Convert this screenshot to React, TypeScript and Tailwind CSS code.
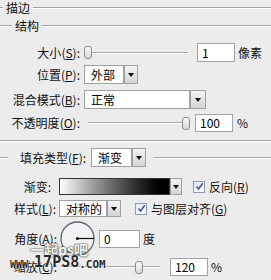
import React from "react";

const font = { fontFamily: '"Noto Sans CJK SC", "Liberation Sans", sans-serif' };

function Key({ k }: { k: string }) {
  return (
    <>
      (<span className="underline underline-offset-1">{k}</span>):
    </>
  );
}

function GroupLine({ lead, label }: { lead: string; label: React.ReactNode }) {
  return (
    <div className="flex items-center">
      <div className={`${lead} h-[2px] border-t border-[#a3a3a3] border-b border-b-white`} />
      <div className="px-[3px] text-[12px] leading-none text-[#111]">{label}</div>
      <div className="flex-1 h-[2px] border-t border-[#a3a3a3] border-b border-b-white" />
    </div>
  );
}

function Input({ value, w }: { value: string; w: string }) {
  return (
    <div className={`${w} h-full border border-[#9da3ab] bg-white pl-[4px] flex items-center text-[12px] leading-none text-black`}>
      {value}
    </div>
  );
}

function Arrow({ w = "w-[14px]" }: { w?: string }) {
  return (
    <div className={`${w} h-full border border-[#a0a0a0] bg-gradient-to-b from-[#f4f4f4] to-[#d4d4d4] flex items-center justify-center`}>
      <div className="w-0 h-0 border-l-[3px] border-r-[3px] border-t-[4px] border-l-transparent border-r-transparent border-t-[#111]" />
    </div>
  );
}

function Select({ value, w }: { value: string; w: string }) {
  return (
    <div className="flex h-full">
      <div className={`${w} h-full border border-[#a0a0a0] bg-white pl-[6px] flex items-center text-[12px] leading-none text-black`}>
        {value}
      </div>
      <Arrow />
    </div>
  );
}

function Thumb() {
  return <div className="w-[8px] h-[13px] rounded-[3px] border border-[#8c8c8c] bg-gradient-to-b from-[#fafafa] to-[#d8d8d8]" />;
}

function Track({ w }: { w: string }) {
  return <div className={`${w} h-[2px] border-t border-[#a8a8a8] border-b border-b-white`} />;
}

function Check({ label }: { label: React.ReactNode }) {
  return (
    <div className="flex items-center gap-[4px]">
      <div className="w-[12px] h-[12px] border border-[#8f98a8] bg-gradient-to-br from-[#e4e8f0] to-white flex items-center justify-center">
        <svg width="9" height="9" viewBox="0 0 9 9">
          <path d="M1.5 4.5 L3.6 7 L7.8 1.2" fill="none" stroke="#3f56a8" strokeWidth="1.6" />
        </svg>
      </div>
      <div className="text-[12px] leading-none text-[#111]">{label}</div>
    </div>
  );
}

export default function App() {
  const label = "text-[12px] leading-none text-[#111] text-right";
  return (
    <div className="relative w-[271px] h-[280px] overflow-hidden bg-[#ececec]" style={font}>
      <div className="h-[16px] flex flex-col justify-center">
        <GroupLine lead="w-[3px]" label="描边" />
      </div>
      <div className="h-[20px] flex flex-col justify-center">
        <GroupLine lead="w-[12px]" label="结构" />
      </div>

      <div className="mt-[7px] h-[19px] flex items-center">
        <div className={`${label} w-[81px] pr-[1px]`}>
          大小<Key k="S" />
        </div>
        <div className="ml-[3px] flex items-center">
          <Thumb />
          <Track w="w-[96px]" />
        </div>
        <div className="ml-[9px] h-full">
          <Input value="1" w="w-[38px]" />
        </div>
        <div className="ml-[3px] text-[12px] leading-none text-[#111]">像素</div>
      </div>

      <div className="mt-[3px] h-[19px] flex items-center">
        <div className={`${label} w-[81px] pr-[1px]`}>
          位置<Key k="P" />
        </div>
        <div className="ml-[3px] h-full">
          <Select value="外部" w="w-[40px]" />
        </div>
      </div>

      <div className="mt-[6px] h-[19px] flex items-center">
        <div className={`${label} w-[81px] pr-[1px]`}>
          混合模式<Key k="B" />
        </div>
        <div className="ml-[3px] h-full flex">
          <div className="w-[106px] h-full border border-[#a0a0a0] bg-white pl-[6px] flex items-center text-[12px] leading-none text-black">
            正常
          </div>
          <Arrow w="w-[16px]" />
        </div>
      </div>

      <div className="mt-[5px] h-[18px] flex items-center">
        <div className={`${label} w-[81px] pr-[1px]`}>
          不透明度<Key k="O" />
        </div>
        <div className="ml-[7px] flex items-center">
          <Track w="w-[94px]" />
          <Thumb />
        </div>
        <div className="ml-[5px] h-full">
          <Input value="100" w="w-[38px]" />
        </div>
        <div className="ml-[4px] text-[12px] leading-none text-[#111]">%</div>
      </div>

      <div className="mt-[8px] h-[2px] border-t border-[#a3a3a3] border-b border-b-white" />

      <div className="mt-[6px] h-[19px] flex items-center">
        <div className="w-[8px] h-[2px] border-t border-[#a3a3a3] border-b border-b-white" />
        <div className="ml-[12px] text-[12px] leading-none text-[#111]">
          填充类型<Key k="F" />
        </div>
        <div className="ml-[5px] h-full">
          <Select value="渐变" w="w-[41px]" />
        </div>
        <div className="ml-[8px] flex-1 h-[2px] border-t border-[#a3a3a3] border-b border-b-white" />
      </div>

      <div className="mt-[11px] h-[17px] flex items-center">
        <div className={`${label} w-[51px]`}>渐变:</div>
        <div className="ml-[8px] h-full flex">
          <div className="w-[111px] h-full border border-[#333] bg-gradient-to-r from-white to-black" />
          <Arrow w="w-[12px]" />
        </div>
        <div className="ml-[11px]">
          <Check label={<>反向(<span className="underline underline-offset-1">R</span>)</>} />
        </div>
      </div>

      <div className="mt-[5px] h-[17px] flex items-center">
        <div className={`${label} w-[56px]`}>
          样式<Key k="L" />
        </div>
        <div className="ml-[3px] h-full">
          <Select value="对称的" w="w-[48px]" />
        </div>
        <div className="ml-[14px]">
          <Check label={<>与图层对齐(<span className="underline underline-offset-1">G</span>)</>} />
        </div>
      </div>

      <div className="mt-[4px] h-[35px] flex items-center">
        <div className={`${label} w-[57px]`}>
          角度<Key k="A" />
        </div>
        <svg className="ml-[3px]" width="36" height="35" viewBox="0 0 36 35">
          <circle cx="17.5" cy="17.5" r="16.5" fill="#f2f2f2" stroke="#5d6678" strokeWidth="1.3" />
          <line x1="17.5" y1="17.5" x2="34" y2="17.5" stroke="#111" strokeWidth="1.2" />
          <circle cx="17.5" cy="17.5" r="1.6" fill="#111" />
        </svg>
        <div className="ml-[3px] h-[18px]">
          <Input value="0" w="w-[41px]" />
        </div>
        <div className="ml-[3px] text-[12px] leading-none text-[#111]">度</div>
      </div>

      <div className="mt-[2px] h-[18px] flex items-center">
        <div className={`${label} w-[57px]`}>
          缩放<Key k="C" />
        </div>
        <div className="ml-[3px] flex items-center">
          <Track w="w-[75px]" />
          <Thumb />
          <Track w="w-[17px]" />
        </div>
        <div className="ml-[10px] h-full">
          <Input value="120" w="w-[38px]" />
        </div>
        <div className="ml-[3px] text-[12px] leading-none text-[#111]">%</div>
      </div>

      {/* watermark over the dialog */}
      <div className="absolute left-[30px] top-[242px] text-[14px] leading-none font-bold text-[#f4f4f4] [text-shadow:0_0_2px_#333,0_0_1px_#333]">
        一起ps吧
      </div>
      <div
        className="absolute left-[10px] top-[255px] flex items-end leading-none font-bold text-[#2a2a2a] [text-shadow:0_0_2px_#fff,0_0_1px_#fff]"
        style={{ fontFamily: '"DejaVu Sans Mono", monospace' }}
      >
        <span className="text-[10px]">WWW.</span>
        <span className="text-[15px]">17PS8</span>
        <span className="text-[11px]">.COM</span>
      </div>
    </div>
  );
}
